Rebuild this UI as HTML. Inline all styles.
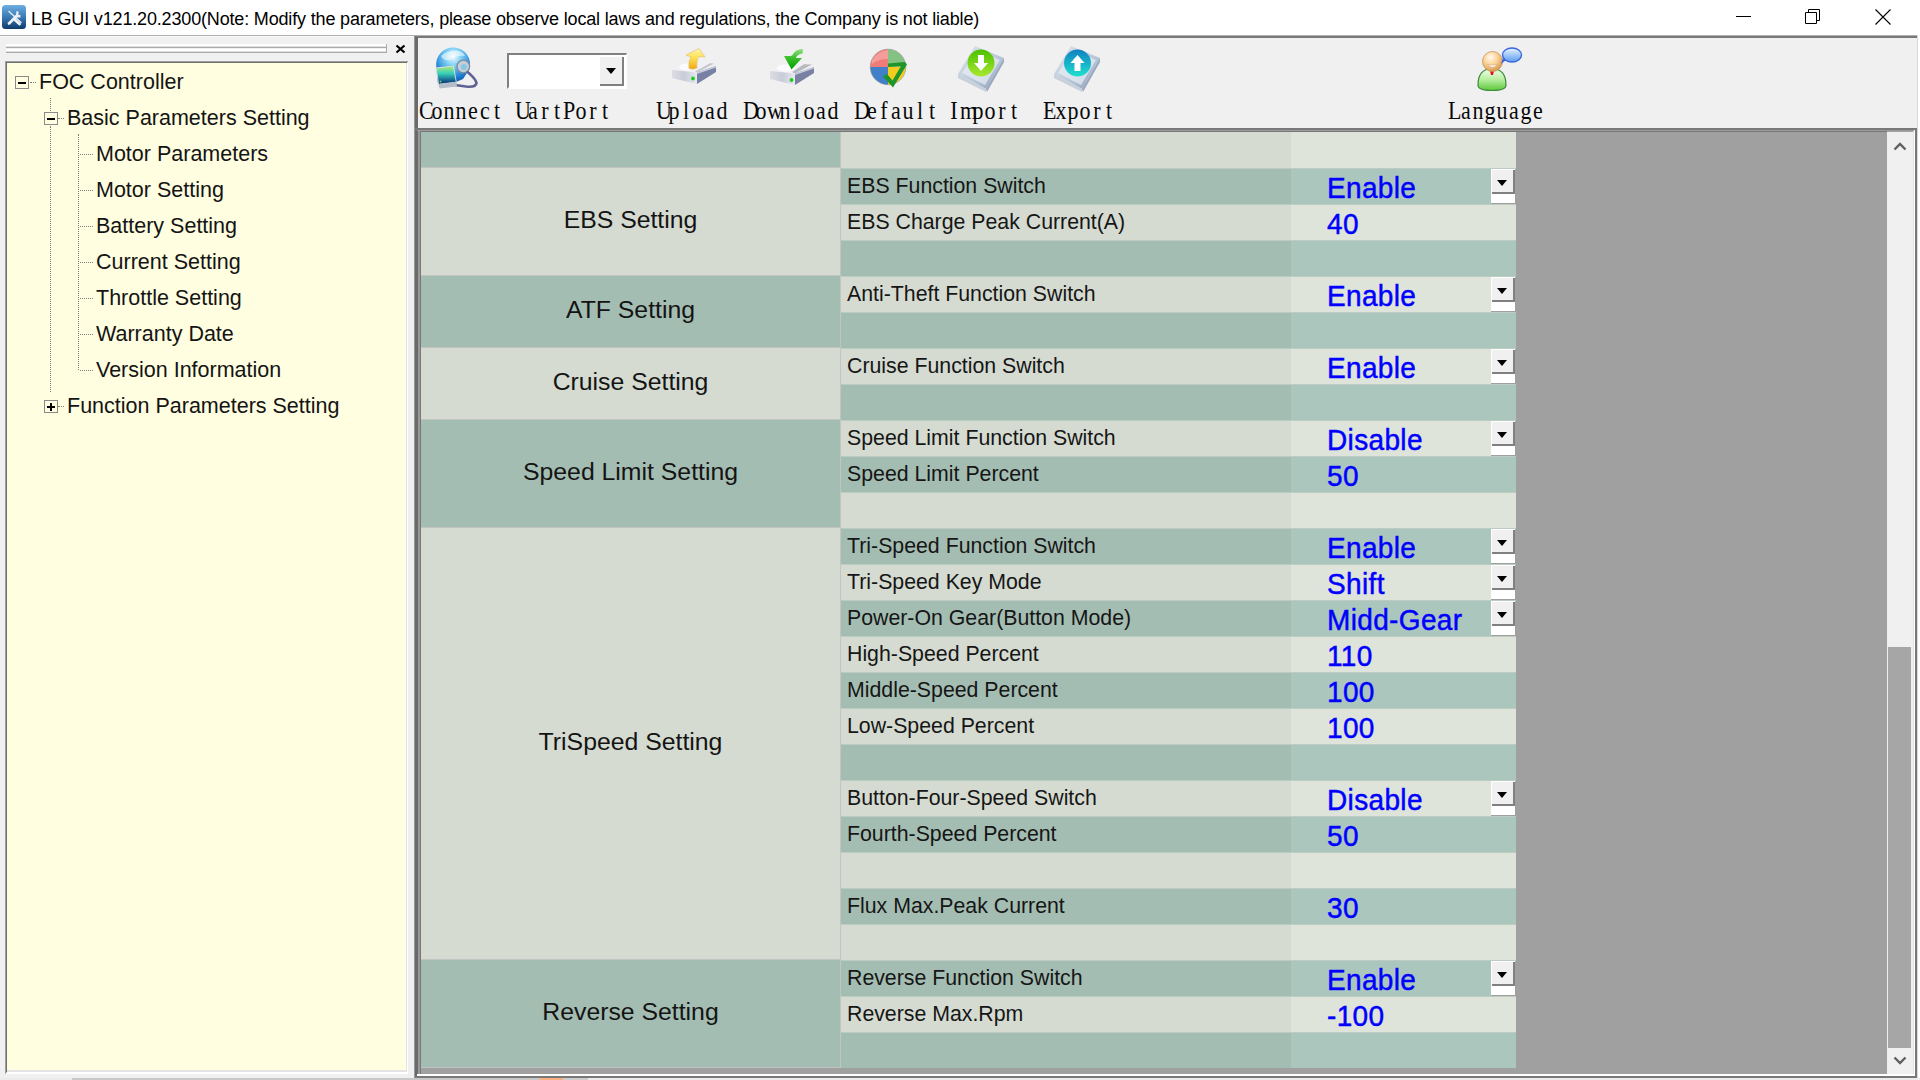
<!DOCTYPE html>
<html><head><meta charset="utf-8">
<style>
*{box-sizing:border-box}
html,body{margin:0;padding:0}
body{width:1920px;height:1080px;position:relative;overflow:hidden;background:#f0f0f0;font-family:"Liberation Sans",sans-serif;color:#000}
.a{position:absolute}
.tb{font-family:"Liberation Serif",serif;font-size:22px;white-space:pre;top:97px;line-height:24px;transform:scaleY(1.14);transform-origin:0 0;color:#080808}
.tb b{display:inline-block;width:12px;text-align:center;font-weight:normal}
.tree{font-size:21.5px;white-space:pre;line-height:24px;color:#141414}
.dv{border-left:1px dotted #808080}
.dh{border-top:1px dotted #808080}
.box{width:14px;height:13px;border:1px solid #8a8a8a;background:#fffee0}
.lab{font-size:21.3px;white-space:pre;line-height:24px;left:847px;color:#161616}
.grp{font-size:24.8px;white-space:pre;text-align:center;left:421px;width:419px;line-height:28px;color:#141414}
.val{font-size:28px;white-space:pre;line-height:30px;left:1327px;color:#0000ff;-webkit-text-stroke:0.45px #0000ff;letter-spacing:0.35px;transform:scaleY(1.05);transform-origin:0 0}
.dd{left:1491px;width:24px;height:34px;background:#fff}
.ddb{position:absolute;left:0;top:0;width:24px;height:25px;background:#f0f0f0;border-left:1px solid #fff;border-top:1px solid #fff;box-shadow:inset -2px -2px 0 #808080}
.ddb:after{content:"";position:absolute;left:5px;top:10px;border-left:5.5px solid transparent;border-right:5.5px solid transparent;border-top:6px solid #000}
</style></head><body>
<!-- TITLE BAR -->
<div class="a" style="left:0;top:0;width:1920px;height:35px;background:#fff"></div>
<div class="a" style="left:0;top:35px;width:1917px;height:1px;background:#b0b0b0"></div>
<div class="a" style="left:0;top:36px;width:414px;height:1px;background:#fafafa"></div>
<div class="a" style="left:414px;top:36px;width:1503px;height:2px;background:#7a7a7a"></div>
<div class="a" style="left:1917px;top:35px;width:1px;height:1045px;background:#d8d8d8"></div>
<div class="a" style="left:1918px;top:35px;width:2px;height:1045px;background:#fff"></div>
<svg class="a" style="left:2px;top:5px" width="24" height="24" viewBox="0 0 24 24">
<defs><linearGradient id="tig" x1="0" y1="0" x2="0" y2="1"><stop offset="0" stop-color="#6eaee2"/><stop offset="0.5" stop-color="#3c7ab4"/><stop offset="1" stop-color="#0c3a6c"/></linearGradient></defs>
<rect x="0" y="0" width="24" height="24" rx="3.5" fill="url(#tig)"/>
<path d="M7 6.5 L19 17.5" stroke="#e4ebf2" stroke-width="1.6" stroke-linecap="round"/>
<path d="M12 14 L17.5 19" stroke="#eef2f6" stroke-width="2.8" stroke-linecap="round"/>
<path d="M7 18.5 L15 10.5" stroke="#eef2f6" stroke-width="2.6" stroke-linecap="round"/>
<path d="M14 9.5 L14.5 6 L16.5 6.5 L16.5 10 L18.5 10 L18.5 12.5 L15 12.5Z" fill="#e8eef4"/>
</svg>
<div class="a" style="left:31px;top:8px;font-size:18px;line-height:22px;white-space:pre;letter-spacing:-0.165px;color:#000">LB GUI v121.20.2300(Note: Modify the parameters, please observe local laws and regulations, the Company is not liable)</div>
<div class="a" style="left:1736px;top:16px;width:15px;height:1px;background:#000"></div>
<svg class="a" style="left:1804px;top:8px" width="18" height="18" viewBox="0 0 18 18"><path d="M1.5 4.5h11v11h-11z M4.5 4.5v-3h11v11h-3" fill="none" stroke="#000" stroke-width="1"/></svg>
<svg class="a" style="left:1874px;top:8px" width="18" height="18" viewBox="0 0 18 18"><path d="M1.5 1.5L16.5 16.5M16.5 1.5L1.5 16.5" stroke="#000" stroke-width="1.1"/></svg>

<!-- LEFT PANEL -->
<div class="a" style="left:6px;top:44px;width:380px;height:2px;background:#fff"></div>
<div class="a" style="left:6px;top:46px;width:380px;height:1px;background:#e0e0e0"></div>
<div class="a" style="left:6px;top:47px;width:381px;height:1px;background:#aaa"></div>
<div class="a" style="left:6px;top:49px;width:380px;height:2px;background:#fff"></div>
<div class="a" style="left:6px;top:51px;width:380px;height:1px;background:#e0e0e0"></div>
<div class="a" style="left:6px;top:52px;width:381px;height:1px;background:#aaa"></div>
<div class="a" style="left:386px;top:44px;width:1px;height:9px;background:#aaa"></div>
<svg class="a" style="left:395px;top:44px" width="11" height="10" viewBox="0 0 11 10"><path d="M1.5 1.5L9.5 8.5M9.5 1.5L1.5 8.5" stroke="#000" stroke-width="2.2"/></svg>
<!-- tree frame -->
<div class="a" style="left:5px;top:61px;width:403px;height:1013px;background:#fffee0;border-top:2px solid #6f6f6f;border-left:2px solid #6f6f6f;border-right:1px solid #fff;border-bottom:2px solid #fff"></div>
<div class="a" style="left:7px;top:1070px;width:400px;height:2px;background:#e3e3e3"></div>
<div class="a" style="left:406px;top:63px;width:1px;height:1009px;background:#e3e3e3"></div>
<div class="a" style="left:5px;top:61px;width:403px;height:1px;background:#a0a0a0"></div>
<div class="a" style="left:5px;top:61px;width:1px;height:1012px;background:#a0a0a0"></div>

<!-- tree -->
<div class="a box" style="left:15px;top:76px"></div>
<div class="a" style="left:18px;top:82px;width:8px;height:2px;background:#000"></div>
<div class="a dh" style="left:30px;top:82px;width:6px"></div>
<div class="a tree" style="left:39px;top:70px">FOC Controller</div>

<div class="a dv" style="left:50px;top:98px;height:13px"></div>
<div class="a box" style="left:44px;top:112px"></div>
<div class="a" style="left:47px;top:118px;width:8px;height:2px;background:#000"></div>
<div class="a dh" style="left:58px;top:118px;width:6px"></div>
<div class="a tree" style="left:67px;top:106px">Basic Parameters Setting</div>
<div class="a dv" style="left:50px;top:126px;height:266px"></div>

<div class="a dv" style="left:78px;top:134px;height:236px"></div>
<div class="a dh" style="left:80px;top:154px;width:13px"></div>
<div class="a tree" style="left:96px;top:142px">Motor Parameters</div>
<div class="a dh" style="left:80px;top:190px;width:13px"></div>
<div class="a tree" style="left:96px;top:178px">Motor Setting</div>
<div class="a dh" style="left:80px;top:226px;width:13px"></div>
<div class="a tree" style="left:96px;top:214px">Battery Setting</div>
<div class="a dh" style="left:80px;top:262px;width:13px"></div>
<div class="a tree" style="left:96px;top:250px">Current Setting</div>
<div class="a dh" style="left:80px;top:298px;width:13px"></div>
<div class="a tree" style="left:96px;top:286px">Throttle Setting</div>
<div class="a dh" style="left:80px;top:334px;width:13px"></div>
<div class="a tree" style="left:96px;top:322px">Warranty Date</div>
<div class="a dh" style="left:80px;top:370px;width:13px"></div>
<div class="a tree" style="left:96px;top:358px">Version Information</div>

<div class="a box" style="left:44px;top:400px"></div>
<div class="a" style="left:47px;top:406px;width:8px;height:2px;background:#000"></div>
<div class="a" style="left:50px;top:403px;width:2px;height:8px;background:#000"></div>
<div class="a dh" style="left:58px;top:406px;width:6px"></div>
<div class="a tree" style="left:67px;top:394px">Function Parameters Setting</div>

<!-- splitter -->
<div class="a" style="left:414px;top:37px;width:1px;height:1041px;background:#999"></div>
<div class="a" style="left:415px;top:37px;width:3px;height:1041px;background:#6a6a6a"></div>
<!-- bottom strip -->
<div class="a" style="left:0;top:1078px;width:1920px;height:2px;background:#ececec"></div>
<div class="a" style="left:72px;top:1078px;width:468px;height:2px;background:#c8c8c8"></div>
<div class="a" style="left:540px;top:1078px;width:23px;height:2px;background:#f8b080"></div>
<div class="a" style="left:563px;top:1078px;width:25px;height:2px;background:#cccccc"></div>

<!-- TOOLBAR -->
<!-- ICONS -->
<svg class="a" style="left:426px;top:40px" width="60" height="56" viewBox="0 0 60 56">
<defs>
<radialGradient id="glb" cx="0.5" cy="0.25" r="0.8"><stop offset="0" stop-color="#f4fbff"/><stop offset="0.3" stop-color="#7fd0f4"/><stop offset="0.7" stop-color="#1f7fd4"/><stop offset="1" stop-color="#0a3e96"/></radialGradient>
<linearGradient id="scr" x1="0" y1="0" x2="0" y2="1"><stop offset="0" stop-color="#a8e878"/><stop offset="0.4" stop-color="#38d0b8"/><stop offset="1" stop-color="#062e7a"/></linearGradient>
</defs>
<path d="M10.3 27 A17 17 0 1 1 43.5 29 L37 39 L30 42 L12 44 Z" fill="url(#glb)"/>
<path d="M15 16 Q22 10 31 10.5 Q38 12 39 16 Q30 15 24 20 Q17 21 15 16Z" fill="#ffffff" opacity="0.55"/>
<circle cx="37.3" cy="26.5" r="6.3" fill="#c4ced8" stroke="#7c8ca0" stroke-width="1.3"/>
<circle cx="37.8" cy="27" r="3" fill="#86c8e4"/>
<path d="M41 31.5 Q50 39 50.5 43 Q50 47.5 40 46.5 Q32 45.5 26 44.5" fill="none" stroke="#606094" stroke-width="2.6"/>
<path d="M9.5 27.5 L28 25.5 L31 44 L12.5 46 Z" fill="#d4dce4"/>
<path d="M10.7 28.5 L27 26.5 L29.8 41.8 L13 43.8 Z" fill="url(#scr)"/>
<path d="M12.5 44 L30.5 42 L31 46.5 L13.5 48.5 Z" fill="#b4bec8"/>
<circle cx="14.5" cy="41.5" r="0.9" fill="#70d850"/>
</svg>
<svg class="a" style="left:666px;top:44px" width="56" height="46" viewBox="0 0 56 46">
<defs>
<linearGradient id="hdf" x1="0" y1="0" x2="1" y2="0"><stop offset="0" stop-color="#dcdce4"/><stop offset="0.5" stop-color="#c8ccd8"/><stop offset="1" stop-color="#e8e8f0"/></linearGradient>
<linearGradient id="ylw" x1="0" y1="0" x2="0" y2="1"><stop offset="0" stop-color="#fff8b0"/><stop offset="0.45" stop-color="#ffe050"/><stop offset="1" stop-color="#f0a818"/></linearGradient>
</defs>
<path d="M6 26 L20 18.5 L48 19.5 L31 28.5 Z" fill="#f0f0f6"/>
<path d="M31 28.5 L48 19.5 L44 19.3 L29 27.5Z" fill="#a8a8b0" opacity="0.6"/>
<path d="M6 26 L31 28.5 L31 40 L6 34 Z" fill="url(#hdf)"/>
<path d="M31 28.5 L50 22 L50 28 L31 40 Z" fill="#7880a4"/>
<path d="M31 28.5 L50 22 L50 23.5 L31 30Z" fill="#c8cce0"/>
<circle cx="27" cy="34.5" r="1.9" fill="#18d018"/>
<ellipse cx="22" cy="23" rx="9" ry="3.5" fill="#fbfbff"/>
<path d="M23 24.5 Q22 18 25 13 L20 11 L33 4.5 L39 13 L33 12.5 Q30 16 31 24 Q27 26 23 24.5Z" fill="url(#ylw)" stroke="#e0c070" stroke-width="0.7"/>
</svg>
<svg class="a" style="left:764px;top:45px" width="56" height="46" viewBox="0 0 56 46">
<defs>
<linearGradient id="grn" x1="0" y1="0" x2="0" y2="1"><stop offset="0" stop-color="#90e080"/><stop offset="0.4" stop-color="#40c030"/><stop offset="1" stop-color="#00a000"/></linearGradient>
</defs>
<path d="M6 26 L20 18.5 L48 19.5 L31 28.5 Z" fill="#f0f0f6"/>
<path d="M31 28.5 L48 19.5 L40 19.3 L28 27Z" fill="#a0a0a8" opacity="0.7"/>
<path d="M6 26 L31 28.5 L31 40 L6 34 Z" fill="url(#hdf)"/>
<path d="M31 28.5 L50 22 L50 28 L31 40 Z" fill="#7880a4"/>
<path d="M31 28.5 L50 22 L50 23.5 L31 30Z" fill="#c8cce0"/>
<circle cx="27.5" cy="35" r="1.9" fill="#18d018"/>
<ellipse cx="22" cy="23" rx="9" ry="3.5" fill="#fbfbff"/>
<path d="M39 4 Q31 4 28.5 10 L27 11 L20 11 L27.5 24.5 L38 13 L32 13 Q33 9 38.5 8.5 Z" fill="url(#grn)"/>
</svg>
<svg class="a" style="left:866px;top:46px" width="44" height="46" viewBox="0 0 44 46">
<circle cx="22" cy="21" r="18.2" fill="#a8a8a8"/>
<path d="M22 21 L22 3.5 A17.5 17.5 0 0 0 4.5 21 Z" fill="#f07c7a"/>
<path d="M22 21 L39.5 21 A17.5 17.5 0 0 0 22 3.5 Z" fill="#84c284"/>
<path d="M22 21 L4.5 21 A17.5 17.5 0 0 0 22 38.5 Z" fill="#3f80c8"/>
<path d="M22 21 L22 38.5 A17.5 17.5 0 0 0 39.5 21 Z" fill="#f4cc20"/>
<path d="M6 14 Q12 5 22 4 L22 13 Q12 13 6 18Z" fill="#fff" opacity="0.25"/>
<path d="M17 30.5 L27 41.5 L41 18.5 L39 16 L22 17.5 L22 21 L35 20 L26.5 34.5 L21 28 Z" fill="#1e962a"/>
</svg>
<svg class="a" style="left:954px;top:42px" width="54" height="52" viewBox="0 0 54 52">
<defs>
<linearGradient id="bk" x1="0" y1="0" x2="1" y2="1"><stop offset="0" stop-color="#dfe6ef"/><stop offset="0.6" stop-color="#b8c6d8"/><stop offset="1" stop-color="#8898b0"/></linearGradient>
<linearGradient id="gc" x1="0" y1="0" x2="0" y2="1"><stop offset="0" stop-color="#4cc000"/><stop offset="1" stop-color="#a8e830"/></linearGradient>
<linearGradient id="bc" x1="0" y1="0" x2="0" y2="1"><stop offset="0" stop-color="#1080c0"/><stop offset="1" stop-color="#20e0d0"/></linearGradient>
</defs>
<path d="M4 32 L21 4 L50 16 L32 47 Z" fill="url(#bk)"/>
<path d="M4 32 L32 47 L32 50 L4 36 Z" fill="#c8d0dc"/>
<path d="M32 47 L50 16 L50 20 L33 50 Z" fill="#98a8c0"/>
<path d="M8 31 L23 8 L46 18 L31 43 Z" fill="#e8eef5" opacity="0.7"/>
<circle cx="27" cy="21" r="13.5" fill="url(#gc)"/>
<path d="M24 13 L30 13 L30 21 L34 21 L27 29 L20 21 L24 21 Z" fill="#fff"/>
</svg>
<svg class="a" style="left:1050px;top:42px" width="54" height="52" viewBox="0 0 54 52">
<path d="M4 32 L21 4 L50 16 L32 47 Z" fill="url(#bk)"/>
<path d="M4 32 L32 47 L32 50 L4 36 Z" fill="#c8d0dc"/>
<path d="M32 47 L50 16 L50 20 L33 50 Z" fill="#98a8c0"/>
<path d="M8 31 L23 8 L46 18 L31 43 Z" fill="#e8eef5" opacity="0.7"/>
<circle cx="27.5" cy="21" r="13.5" fill="url(#bc)"/>
<path d="M24.5 29 L30.5 29 L30.5 21 L34.5 21 L27.5 13 L20.5 21 L24.5 21 Z" fill="#fff"/>
</svg>
<svg class="a" style="left:1472px;top:44px" width="54" height="50" viewBox="0 0 54 50">
<defs>
<radialGradient id="hd" cx="0.4" cy="0.3" r="0.7"><stop offset="0" stop-color="#fffaf0"/><stop offset="0.5" stop-color="#fcd49a"/><stop offset="1" stop-color="#d89a50"/></radialGradient>
<linearGradient id="bd" x1="0" y1="0" x2="0" y2="1"><stop offset="0" stop-color="#f0fff0"/><stop offset="0.5" stop-color="#b8eea0"/><stop offset="1" stop-color="#5cc83a"/></linearGradient>
<linearGradient id="bb" x1="0" y1="0" x2="0" y2="1"><stop offset="0" stop-color="#e8f4ff"/><stop offset="1" stop-color="#5a9cf0"/></linearGradient>
</defs>
<path d="M6 41 Q6 25 20 24.5 Q34 25 34 41 Q34 46.5 20 46.5 Q6 46.5 6 41Z" fill="url(#bd)" stroke="#3a8a3a" stroke-width="1.2"/>
<path d="M18 27 L22 27 L21 31 L19 31Z" fill="#e81010"/>
<circle cx="20.5" cy="17.5" r="10" fill="url(#hd)" stroke="#c8905a" stroke-width="0.8"/>
<path d="M15.5 20.5 Q20.5 26 25.5 20.5 Q20.5 22 15.5 20.5Z" fill="#fff" stroke="#c89060" stroke-width="0.4"/>
<ellipse cx="40" cy="11" rx="9.5" ry="7" fill="url(#bb)" stroke="#3a66d8" stroke-width="1.4"/>
<path d="M31 14 L29 20 L34 16Z" fill="#3a66d8"/>
</svg>
<div id="toolbar"></div>
<div class="a tb" style="left:419px"><b>C</b><b>o</b><b>n</b><b>n</b><b>e</b><b>c</b><b>t</b></div>
<div class="a tb" style="left:515px"><b>U</b><b>a</b><b>r</b><b>t</b><b>P</b><b>o</b><b>r</b><b>t</b></div>
<div class="a tb" style="left:656px"><b>U</b><b>p</b><b>l</b><b>o</b><b>a</b><b>d</b></div>
<div class="a tb" style="left:743px"><b>D</b><b>o</b><b>w</b><b>n</b><b>l</b><b>o</b><b>a</b><b>d</b></div>
<div class="a tb" style="left:854px"><b>D</b><b>e</b><b>f</b><b>a</b><b>u</b><b>l</b><b>t</b></div>
<div class="a tb" style="left:948px"><b>I</b><b>m</b><b>p</b><b>o</b><b>r</b><b>t</b></div>
<div class="a tb" style="left:1043px"><b>E</b><b>x</b><b>p</b><b>o</b><b>r</b><b>t</b></div>
<div class="a tb" style="left:1448px"><b>L</b><b>a</b><b>n</b><b>g</b><b>u</b><b>a</b><b>g</b><b>e</b></div>

<!-- combobox -->
<div class="a" style="left:507px;top:53px;width:120px;height:36px;background:#fff;border-left:2px solid #808080;border-top:2px solid #808080;border-right:1px solid #fff;border-bottom:2px solid #fff"></div>
<div class="a" style="left:599px;top:56px;width:25px;height:30px;background:#f0f0f0;border-left:1px solid #fff;border-top:1px solid #fff;box-shadow:inset -2px -2px 0 #808080"></div>
<div class="a" style="left:606px;top:68px;border-left:5.5px solid transparent;border-right:5.5px solid transparent;border-top:6px solid #000;width:0;height:0"></div>

<!-- CONTENT FRAME -->
<div class="a" style="left:418px;top:130px;width:1497px;height:946px;background:#a0a0a0"></div>
<div class="a" style="left:415px;top:128px;width:1502px;height:2px;background:#787878"></div>
<div class="a" style="left:417px;top:130px;width:1497px;height:1px;background:#9c9c9c"></div>
<div class="a" style="left:420px;top:131px;width:1467px;height:1px;background:#787878"></div>
<div class="a" style="left:418px;top:130px;width:2px;height:945px;background:#999"></div>
<div class="a" style="left:420px;top:131px;width:1px;height:943px;background:#787878"></div>
<div class="a" style="left:1915px;top:128px;width:2px;height:950px;background:#787878"></div>
<div class="a" style="left:1914px;top:130px;width:1px;height:946px;background:#fff"></div>
<div class="a" style="left:417px;top:1074px;width:1498px;height:2px;background:#fff"></div>
<div class="a" style="left:415px;top:1076px;width:1502px;height:2px;background:#787878"></div>
<div id="table">
<div class="a" style="left:421px;top:132px;width:419px;height:35px;background:#a4bdb2"></div>
<div class="a" style="left:421px;top:167px;width:419px;height:1px;background:#c4c4c4"></div>
<div class="a" style="left:421px;top:168px;width:419px;height:107px;background:#d5dbd1"></div>
<div class="a" style="left:421px;top:275px;width:419px;height:1px;background:#c4c4c4"></div>
<div class="a grp" style="top:206px">EBS Setting</div>
<div class="a" style="left:421px;top:276px;width:419px;height:71px;background:#a4bdb2"></div>
<div class="a" style="left:421px;top:347px;width:419px;height:1px;background:#c4c4c4"></div>
<div class="a grp" style="top:296px">ATF Setting</div>
<div class="a" style="left:421px;top:348px;width:419px;height:71px;background:#d5dbd1"></div>
<div class="a" style="left:421px;top:419px;width:419px;height:1px;background:#c4c4c4"></div>
<div class="a grp" style="top:368px">Cruise Setting</div>
<div class="a" style="left:421px;top:420px;width:419px;height:107px;background:#a4bdb2"></div>
<div class="a" style="left:421px;top:527px;width:419px;height:1px;background:#c4c4c4"></div>
<div class="a grp" style="top:458px">Speed Limit Setting</div>
<div class="a" style="left:421px;top:528px;width:419px;height:431px;background:#d5dbd1"></div>
<div class="a" style="left:421px;top:959px;width:419px;height:1px;background:#c4c4c4"></div>
<div class="a grp" style="top:728px">TriSpeed Setting</div>
<div class="a" style="left:421px;top:960px;width:419px;height:107px;background:#a4bdb2"></div>
<div class="a" style="left:421px;top:1067px;width:419px;height:1px;background:#c4c4c4"></div>
<div class="a grp" style="top:998px">Reverse Setting</div>
<div class="a" style="left:840px;top:132px;width:1px;height:936px;background:#c4c4c4"></div>
<div class="a" style="left:841px;top:132px;width:450px;height:36px;background:#d5dbd1"></div>
<div class="a" style="left:1291px;top:132px;width:225px;height:36px;background:#dfe4da"></div>
<div class="a" style="left:841px;top:168px;width:450px;height:36px;background:#a4bdb2"></div>
<div class="a" style="left:1291px;top:168px;width:200px;height:36px;background:#abc7bd"></div>
<div class="a" style="left:841px;top:168px;width:675px;height:1px;background:#bdccc2"></div>
<div class="a dd" style="top:169px"><div class="ddb"></div></div>
<div class="a lab" style="top:174px">EBS Function Switch</div>
<div class="a val" style="top:173px">Enable</div>
<div class="a" style="left:841px;top:204px;width:450px;height:36px;background:#d5dbd1"></div>
<div class="a" style="left:1291px;top:204px;width:225px;height:36px;background:#dfe4da"></div>
<div class="a" style="left:841px;top:204px;width:675px;height:1px;background:#bdccc2"></div>
<div class="a lab" style="top:210px">EBS Charge Peak Current(A)</div>
<div class="a val" style="top:209px">40</div>
<div class="a" style="left:841px;top:240px;width:450px;height:36px;background:#a4bdb2"></div>
<div class="a" style="left:1291px;top:240px;width:225px;height:36px;background:#abc7bd"></div>
<div class="a" style="left:841px;top:240px;width:675px;height:1px;background:#bdccc2"></div>
<div class="a" style="left:841px;top:276px;width:450px;height:36px;background:#d5dbd1"></div>
<div class="a" style="left:1291px;top:276px;width:200px;height:36px;background:#dfe4da"></div>
<div class="a" style="left:841px;top:276px;width:675px;height:1px;background:#bdccc2"></div>
<div class="a dd" style="top:277px"><div class="ddb"></div></div>
<div class="a lab" style="top:282px">Anti-Theft Function Switch</div>
<div class="a val" style="top:281px">Enable</div>
<div class="a" style="left:841px;top:312px;width:450px;height:36px;background:#a4bdb2"></div>
<div class="a" style="left:1291px;top:312px;width:225px;height:36px;background:#abc7bd"></div>
<div class="a" style="left:841px;top:312px;width:675px;height:1px;background:#bdccc2"></div>
<div class="a" style="left:841px;top:348px;width:450px;height:36px;background:#d5dbd1"></div>
<div class="a" style="left:1291px;top:348px;width:200px;height:36px;background:#dfe4da"></div>
<div class="a" style="left:841px;top:348px;width:675px;height:1px;background:#bdccc2"></div>
<div class="a dd" style="top:349px"><div class="ddb"></div></div>
<div class="a lab" style="top:354px">Cruise Function Switch</div>
<div class="a val" style="top:353px">Enable</div>
<div class="a" style="left:841px;top:384px;width:450px;height:36px;background:#a4bdb2"></div>
<div class="a" style="left:1291px;top:384px;width:225px;height:36px;background:#abc7bd"></div>
<div class="a" style="left:841px;top:384px;width:675px;height:1px;background:#bdccc2"></div>
<div class="a" style="left:841px;top:420px;width:450px;height:36px;background:#d5dbd1"></div>
<div class="a" style="left:1291px;top:420px;width:200px;height:36px;background:#dfe4da"></div>
<div class="a" style="left:841px;top:420px;width:675px;height:1px;background:#bdccc2"></div>
<div class="a dd" style="top:421px"><div class="ddb"></div></div>
<div class="a lab" style="top:426px">Speed Limit Function Switch</div>
<div class="a val" style="top:425px">Disable</div>
<div class="a" style="left:841px;top:456px;width:450px;height:36px;background:#a4bdb2"></div>
<div class="a" style="left:1291px;top:456px;width:225px;height:36px;background:#abc7bd"></div>
<div class="a" style="left:841px;top:456px;width:675px;height:1px;background:#bdccc2"></div>
<div class="a lab" style="top:462px">Speed Limit Percent</div>
<div class="a val" style="top:461px">50</div>
<div class="a" style="left:841px;top:492px;width:450px;height:36px;background:#d5dbd1"></div>
<div class="a" style="left:1291px;top:492px;width:225px;height:36px;background:#dfe4da"></div>
<div class="a" style="left:841px;top:492px;width:675px;height:1px;background:#bdccc2"></div>
<div class="a" style="left:841px;top:528px;width:450px;height:36px;background:#a4bdb2"></div>
<div class="a" style="left:1291px;top:528px;width:200px;height:36px;background:#abc7bd"></div>
<div class="a" style="left:841px;top:528px;width:675px;height:1px;background:#bdccc2"></div>
<div class="a dd" style="top:529px"><div class="ddb"></div></div>
<div class="a lab" style="top:534px">Tri-Speed Function Switch</div>
<div class="a val" style="top:533px">Enable</div>
<div class="a" style="left:841px;top:564px;width:450px;height:36px;background:#d5dbd1"></div>
<div class="a" style="left:1291px;top:564px;width:200px;height:36px;background:#dfe4da"></div>
<div class="a" style="left:841px;top:564px;width:675px;height:1px;background:#bdccc2"></div>
<div class="a dd" style="top:565px"><div class="ddb"></div></div>
<div class="a lab" style="top:570px">Tri-Speed Key Mode</div>
<div class="a val" style="top:569px">Shift</div>
<div class="a" style="left:841px;top:600px;width:450px;height:36px;background:#a4bdb2"></div>
<div class="a" style="left:1291px;top:600px;width:200px;height:36px;background:#abc7bd"></div>
<div class="a" style="left:841px;top:600px;width:675px;height:1px;background:#bdccc2"></div>
<div class="a dd" style="top:601px"><div class="ddb"></div></div>
<div class="a lab" style="top:606px">Power-On Gear(Button Mode)</div>
<div class="a val" style="top:605px">Midd-Gear</div>
<div class="a" style="left:841px;top:636px;width:450px;height:36px;background:#d5dbd1"></div>
<div class="a" style="left:1291px;top:636px;width:225px;height:36px;background:#dfe4da"></div>
<div class="a" style="left:841px;top:636px;width:675px;height:1px;background:#bdccc2"></div>
<div class="a lab" style="top:642px">High-Speed Percent</div>
<div class="a val" style="top:641px">110</div>
<div class="a" style="left:841px;top:672px;width:450px;height:36px;background:#a4bdb2"></div>
<div class="a" style="left:1291px;top:672px;width:225px;height:36px;background:#abc7bd"></div>
<div class="a" style="left:841px;top:672px;width:675px;height:1px;background:#bdccc2"></div>
<div class="a lab" style="top:678px">Middle-Speed Percent</div>
<div class="a val" style="top:677px">100</div>
<div class="a" style="left:841px;top:708px;width:450px;height:36px;background:#d5dbd1"></div>
<div class="a" style="left:1291px;top:708px;width:225px;height:36px;background:#dfe4da"></div>
<div class="a" style="left:841px;top:708px;width:675px;height:1px;background:#bdccc2"></div>
<div class="a lab" style="top:714px">Low-Speed Percent</div>
<div class="a val" style="top:713px">100</div>
<div class="a" style="left:841px;top:744px;width:450px;height:36px;background:#a4bdb2"></div>
<div class="a" style="left:1291px;top:744px;width:225px;height:36px;background:#abc7bd"></div>
<div class="a" style="left:841px;top:744px;width:675px;height:1px;background:#bdccc2"></div>
<div class="a" style="left:841px;top:780px;width:450px;height:36px;background:#d5dbd1"></div>
<div class="a" style="left:1291px;top:780px;width:200px;height:36px;background:#dfe4da"></div>
<div class="a" style="left:841px;top:780px;width:675px;height:1px;background:#bdccc2"></div>
<div class="a dd" style="top:781px"><div class="ddb"></div></div>
<div class="a lab" style="top:786px">Button-Four-Speed Switch</div>
<div class="a val" style="top:785px">Disable</div>
<div class="a" style="left:841px;top:816px;width:450px;height:36px;background:#a4bdb2"></div>
<div class="a" style="left:1291px;top:816px;width:225px;height:36px;background:#abc7bd"></div>
<div class="a" style="left:841px;top:816px;width:675px;height:1px;background:#bdccc2"></div>
<div class="a lab" style="top:822px">Fourth-Speed Percent</div>
<div class="a val" style="top:821px">50</div>
<div class="a" style="left:841px;top:852px;width:450px;height:36px;background:#d5dbd1"></div>
<div class="a" style="left:1291px;top:852px;width:225px;height:36px;background:#dfe4da"></div>
<div class="a" style="left:841px;top:852px;width:675px;height:1px;background:#bdccc2"></div>
<div class="a" style="left:841px;top:888px;width:450px;height:36px;background:#a4bdb2"></div>
<div class="a" style="left:1291px;top:888px;width:225px;height:36px;background:#abc7bd"></div>
<div class="a" style="left:841px;top:888px;width:675px;height:1px;background:#bdccc2"></div>
<div class="a lab" style="top:894px">Flux Max.Peak Current</div>
<div class="a val" style="top:893px">30</div>
<div class="a" style="left:841px;top:924px;width:450px;height:36px;background:#d5dbd1"></div>
<div class="a" style="left:1291px;top:924px;width:225px;height:36px;background:#dfe4da"></div>
<div class="a" style="left:841px;top:924px;width:675px;height:1px;background:#bdccc2"></div>
<div class="a" style="left:841px;top:960px;width:450px;height:36px;background:#a4bdb2"></div>
<div class="a" style="left:1291px;top:960px;width:200px;height:36px;background:#abc7bd"></div>
<div class="a" style="left:841px;top:960px;width:675px;height:1px;background:#bdccc2"></div>
<div class="a dd" style="top:961px"><div class="ddb"></div></div>
<div class="a lab" style="top:966px">Reverse Function Switch</div>
<div class="a val" style="top:965px">Enable</div>
<div class="a" style="left:841px;top:996px;width:450px;height:36px;background:#d5dbd1"></div>
<div class="a" style="left:1291px;top:996px;width:225px;height:36px;background:#dfe4da"></div>
<div class="a" style="left:841px;top:996px;width:675px;height:1px;background:#bdccc2"></div>
<div class="a lab" style="top:1002px">Reverse Max.Rpm</div>
<div class="a val" style="top:1001px">-100</div>
<div class="a" style="left:841px;top:1032px;width:450px;height:36px;background:#a4bdb2"></div>
<div class="a" style="left:1291px;top:1032px;width:225px;height:36px;background:#abc7bd"></div>
<div class="a" style="left:841px;top:1032px;width:675px;height:1px;background:#bdccc2"></div>
</div>
<!-- SCROLLBAR -->
<div class="a" style="left:1887px;top:132px;width:26px;height:942px;background:#f0f0f0"></div>
<div class="a" style="left:1913px;top:131px;width:1px;height:943px;background:#e3e3e3"></div>
<div class="a" style="left:1888px;top:647px;width:23px;height:401px;background:#a6a6a6"></div>
<svg class="a" style="left:1893px;top:140px" width="14" height="12" viewBox="0 0 14 12"><path d="M1.5 9.5L7 4 12.5 9.5" fill="none" stroke="#606060" stroke-width="2.4"/></svg>
<svg class="a" style="left:1893px;top:1055px" width="14" height="12" viewBox="0 0 14 12"><path d="M1.5 2.5L7 8 12.5 2.5" fill="none" stroke="#606060" stroke-width="2.4"/></svg>

</body></html>
